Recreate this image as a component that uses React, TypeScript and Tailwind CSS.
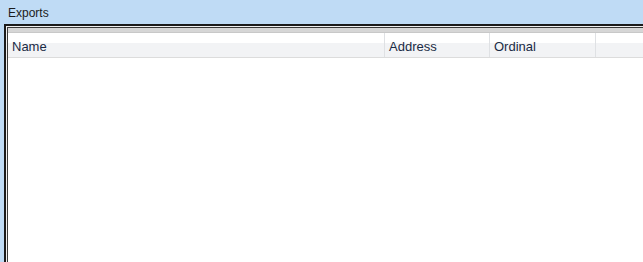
export default function App() {
  const cols = [
    { label: "Name", width: "w-[377px]" },
    { label: "Address", width: "w-[105px]" },
    { label: "Ordinal", width: "w-[106px]" },
    { label: "", width: "w-[48px]" },
  ]

  return (
    <div className="flex h-[262px] w-[643px] flex-col overflow-hidden bg-[#bfdbf5] font-['Liberation_Sans',sans-serif]">
      {/* title strip */}
      <div className="flex h-[24px] items-center pl-[8px] pt-[1px] text-[12px] text-[#1b1b1b]">Exports</div>

      {/* list view frame */}
      <div className="ml-[4px] flex flex-1 flex-col border-l-2 border-t-2 border-[#1a1a1a] bg-white">
        <div className="flex flex-1 flex-col border-l border-t border-[#f0f0f0]">
          <div className="flex flex-1 flex-col border-l border-t border-[#3a3a3a] bg-white">
            <div className="h-[5px] border-b border-[#c8c8c8] bg-[#d6d6d6]" />
            <div className="flex h-[25px] border-b border-[#dcdcdc] bg-[linear-gradient(#ffffff_0%,#ffffff_40%,#f2f3f5_41%,#f2f3f5_100%)]">
              {cols.map((c, i) => (
                <div
                  key={i}
                  className={`${c.width} flex shrink-0 items-center border-r border-[#dfe1e4] pl-[4px] pt-[3px] text-[13px] text-[#1a2b45]`}
                >
                  {c.label}
                </div>
              ))}
            </div>
            <div className="flex-1 bg-white" />
          </div>
        </div>
      </div>
    </div>
  )
}
